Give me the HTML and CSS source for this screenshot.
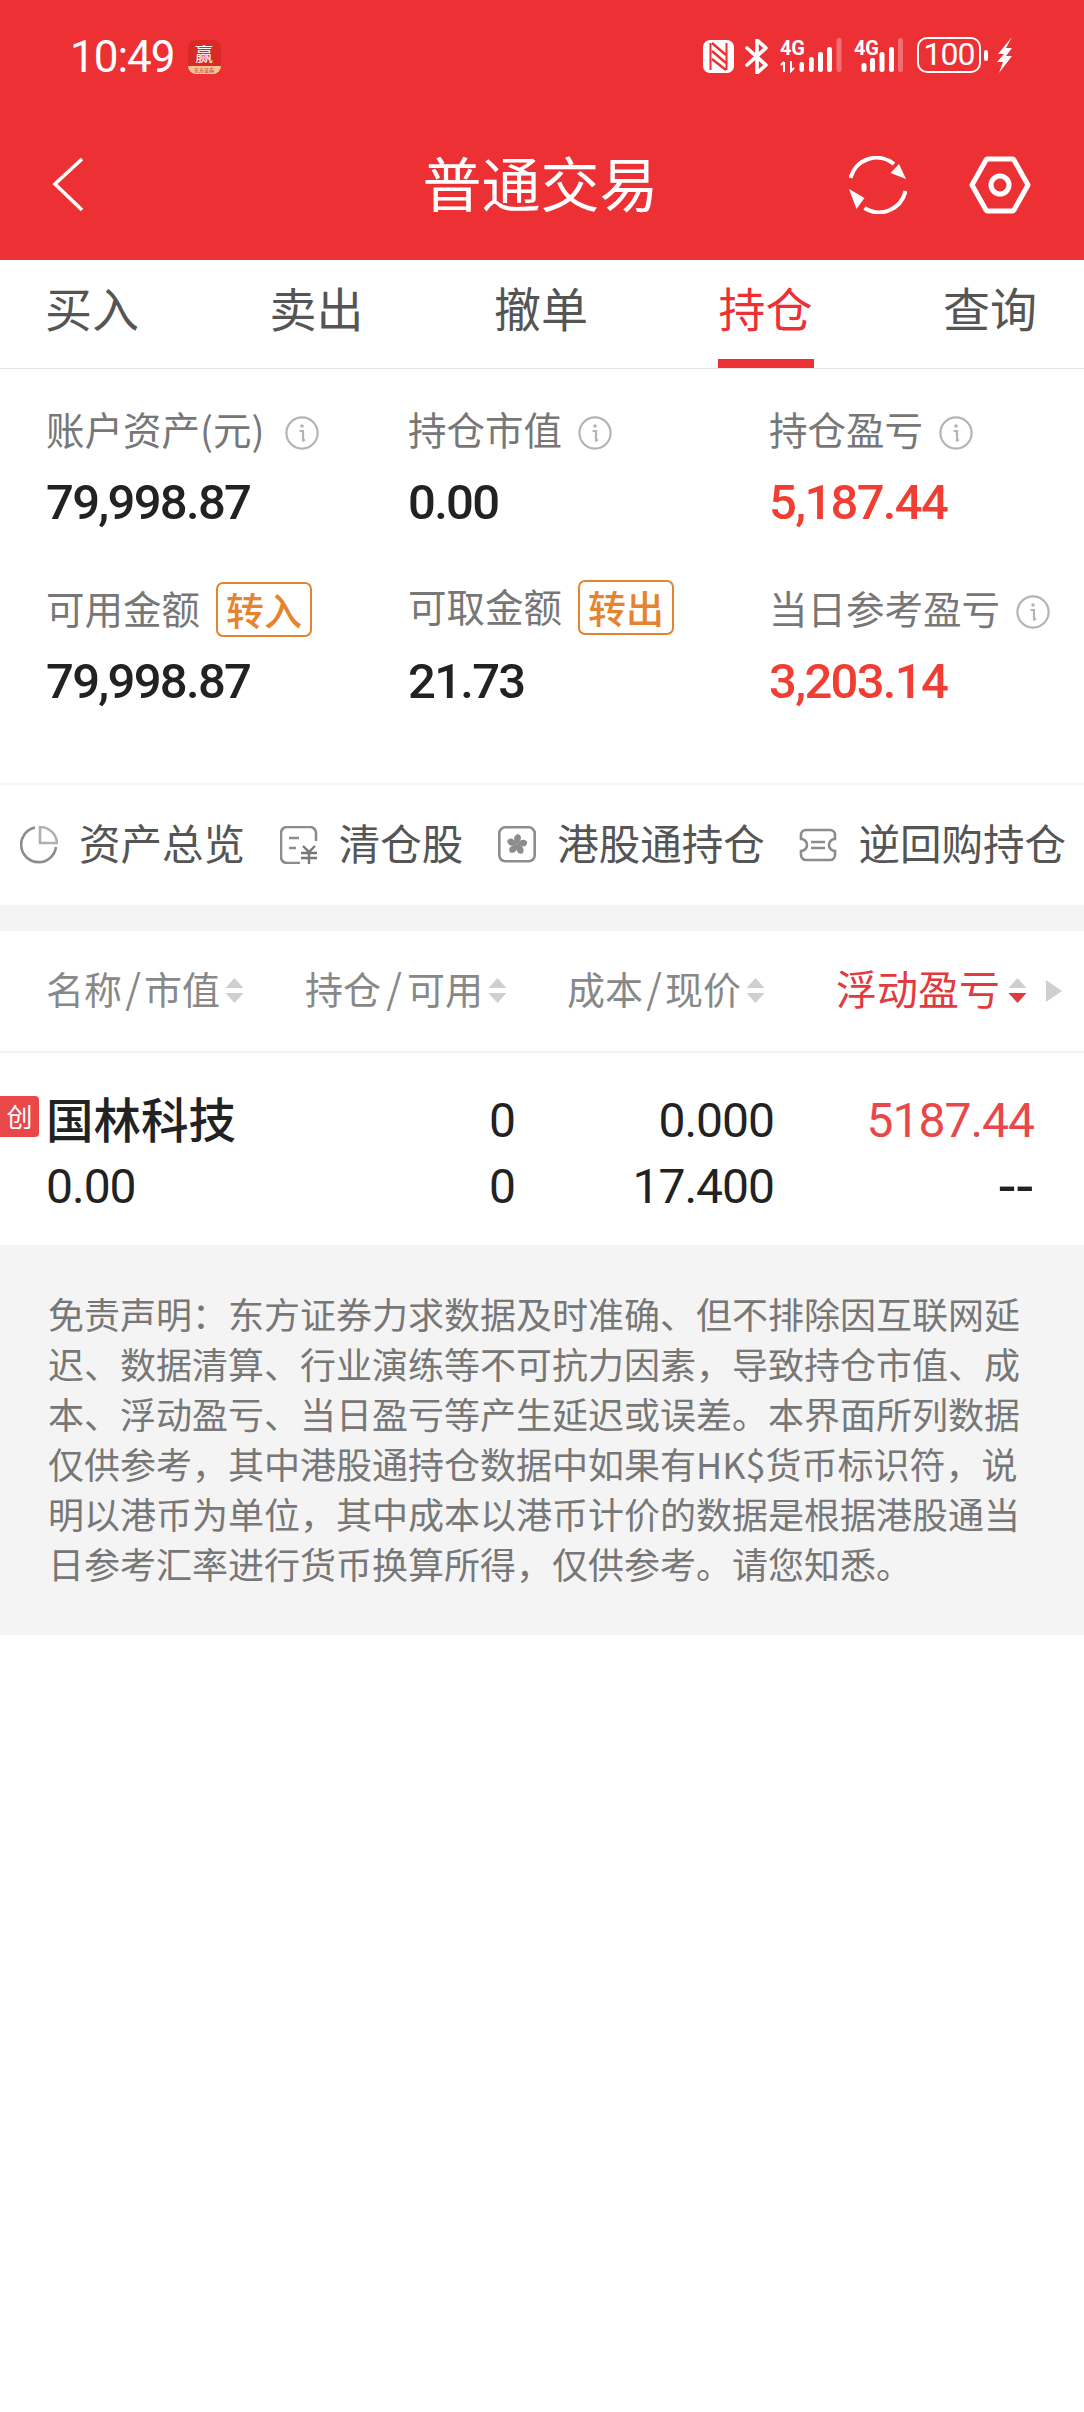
FILE: index.html
```html
<!DOCTYPE html>
<html lang="zh-CN">
<head>
<meta charset="utf-8">
<title>普通交易</title>
<link rel="stylesheet" href="styles.css">
</head>
<body>
<header class="top">
  <div class="status">
    <div class="status-left">
      <span class="clock">10:49</span>
      <span class="appicon"><span class="appicon-char">赢</span><span class="appicon-band">东方证券</span></span>
    </div>
    <div class="status-right">
      <svg class="ic-nfc" viewBox="0 0 31 33"><rect width="31" height="33" rx="7" fill="#fff"/><path d="M7.5 3v27M23.5 3v27" stroke="#ec3033" stroke-width="2"/><path d="M9 3l14 12M9 11l14 12M9 19l14 11" stroke="#ec3033" stroke-width="2.4" fill="none"/></svg>
      <svg class="ic-bt" viewBox="0 0 23 35"><path d="M2 9l19 17-9 8V1l9 8L2 26" fill="none" stroke="#fff" stroke-width="3.6" stroke-linejoin="round" stroke-linecap="round"/></svg>
      <svg class="ic-sig1" viewBox="0 0 62 36"><text x="0" y="18" class="sig-text">4G</text><path d="M4 35V25M1 28l3-3M11 24v10l3-3" fill="none" stroke="#fff" stroke-width="2"/><rect x="19.500" y="25" width="4.500" height="10" rx="2.200" fill="#fff"/><rect x="29" y="20" width="4.800" height="15" rx="2.200" fill="#fff"/><rect x="38" y="15" width="5" height="20" rx="2.200" fill="#fff"/><rect x="47" y="10" width="5" height="25" rx="2.200" fill="#fff"/><rect x="56.500" y="1" width="5" height="34" rx="2.200" fill="#fff" opacity=".3"/></svg>
      <svg class="ic-sig2" viewBox="0 0 50 36"><text x="0" y="18" class="sig-text">4G</text><rect x="7.500" y="26" width="5" height="9" rx="2.200" fill="#fff"/><rect x="16" y="21" width="5" height="14" rx="2.200" fill="#fff"/><rect x="25.500" y="15" width="5" height="20" rx="2.200" fill="#fff"/><rect x="35" y="10" width="5" height="25" rx="2.200" fill="#fff"/><rect x="44" y="1" width="5" height="34" rx="2.200" fill="#fff" opacity=".3"/></svg>
      <div class="battery"><span class="bat-body">100</span><span class="bat-nub"></span></div>
      <svg class="ic-bolt" viewBox="0 0 15 36"><path d="M15 0L1 17h6L0 25h6L2 36 15 19H9l6-8H9z" fill="#fff"/></svg>
    </div>
  </div>
  <nav class="nav">
    <svg class="ic-back" viewBox="0 0 36 60"><path d="M32 4L5 29l27 26" fill="none" stroke="#fff" stroke-width="3.600"/></svg>
    <h1 class="title">普通交易</h1>
    <div class="nav-actions">
      <svg class="ic-refresh" viewBox="0 0 58 58"><path d="M1.500 22A27 27 0 0 1 45 8" fill="none" stroke="#fff" stroke-width="4"/><path d="M41.500 17L57 23 50 8z" fill="#fff"/><path d="M56.500 35A27 27 0 0 1 15.500 52" fill="none" stroke="#fff" stroke-width="4"/><path d="M15.500 42L0 33 7.500 53z" fill="#fff"/></svg>
      <svg class="ic-hex" viewBox="0 0 62 60"><path d="M3 30L17 5a2 2 0 0 1 2-1H43a2 2 0 0 1 2 1L59 30 45 55a2 2 0 0 1-2 1H19a2 2 0 0 1-2-1z" fill="none" stroke="#fff" stroke-width="5" stroke-linejoin="round"/><circle cx="31" cy="30" r="9" fill="none" stroke="#fff" stroke-width="5"/></svg>
    </div>
  </nav>
</header>

<div class="tabs">
  <span class="tab">买入</span>
  <span class="tab">卖出</span>
  <span class="tab">撤单</span>
  <span class="tab tab-active">持仓</span>
  <span class="tab">查询</span>
</div>

<section class="stats">
  <div class="stat">
    <div class="stat-label">账户资产(元)<svg class="ic-info gap-s" viewBox="0 0 34 34"><use href="#info"/></svg></div>
    <div class="stat-value">79,998.87</div>
  </div>
  <div class="stat">
    <div class="stat-label">持仓市值<svg class="ic-info" viewBox="0 0 34 34"><use href="#info"/></svg></div>
    <div class="stat-value">0.00</div>
  </div>
  <div class="stat">
    <div class="stat-label">持仓盈亏<svg class="ic-info" viewBox="0 0 34 34"><use href="#info"/></svg></div>
    <div class="stat-value up">5,187.44</div>
  </div>
  <div class="stat">
    <div class="stat-label">可用金额<span class="btn">转入</span></div>
    <div class="stat-value">79,998.87</div>
  </div>
  <div class="stat">
    <div class="stat-label raised">可取金额<span class="btn">转出</span></div>
    <div class="stat-value">21.73</div>
  </div>
  <div class="stat">
    <div class="stat-label">当日参考盈亏<svg class="ic-info" viewBox="0 0 34 34"><use href="#info"/></svg></div>
    <div class="stat-value up">3,203.14</div>
  </div>
</section>

<div class="shortcuts">
  <div class="shortcut">
    <svg class="ic-short" viewBox="0 0 38 38"><path d="M15 1.500A17.500 17.500 0 1 0 36 21" fill="none" stroke="#8c8c8c" stroke-width="2.600"/><path d="M20 1v16h17A17 17 0 0 0 20 1z" fill="none" stroke="#b0b0b0" stroke-width="2.600"/></svg>
    <span class="sc-text">资产总览</span>
  </div>
  <div class="shortcut">
    <svg class="ic-short" viewBox="0 0 38 38"><path d="M36 15V7a6 6 0 0 0-6-6H7a6 6 0 0 0-6 6v24a6 6 0 0 0 6 6h13" fill="none" stroke="#8c8c8c" stroke-width="2.600"/><path d="M9 12h10M9 22h7" stroke="#8c8c8c" stroke-width="2.600"/><path d="M23 20l6 6 6-6M21 27h16M21 32h16M29 26v12" fill="none" stroke="#777" stroke-width="2.400"/></svg>
    <span class="sc-text">清仓股</span>
  </div>
  <div class="shortcut">
    <svg class="ic-short" viewBox="0 0 38 38"><rect x="1.300" y="1.300" width="35.400" height="34" rx="6" fill="none" stroke="#8c8c8c" stroke-width="2.600"/><g fill="#8c8c8c"><path id="petal" d="M19 18.500C15 15 15 10 19.500 8 23 9 24 12 22 14.500 21 16 20 17 19 18.500z"/><use href="#petal" transform="rotate(72 19 18.500)"/><use href="#petal" transform="rotate(144 19 18.500)"/><use href="#petal" transform="rotate(216 19 18.500)"/><use href="#petal" transform="rotate(288 19 18.500)"/></g></svg>
    <span class="sc-text">港股通持仓</span>
  </div>
  <div class="shortcut">
    <svg class="ic-short" viewBox="0 0 38 38"><path d="M7 4H31a5 5 0 0 1 5 5v4a6 6 0 0 0 0 12v4a5 5 0 0 1-5 5H7a5 5 0 0 1-5-5v-4a6 6 0 0 0 0-12V9a5 5 0 0 1 5-5z" fill="none" stroke="#8c8c8c" stroke-width="2.600"/><path d="M12 16h14M12 22h14" stroke="#8c8c8c" stroke-width="2.400"/></svg>
    <span class="sc-text">逆回购持仓</span>
  </div>
</div>

<div class="band"></div>

<div class="thead">
  <div class="th"><span class="th-text">名称<i class="sl">/</i>市值</span><svg class="ic-sort" viewBox="0 0 19 26"><use href="#sort"/></svg></div>
  <div class="th"><span class="th-text">持仓<i class="sl sl-wide">/</i>可用</span><svg class="ic-sort" viewBox="0 0 19 26"><use href="#sort"/></svg></div>
  <div class="th"><span class="th-text">成本<i class="sl">/</i>现价</span><svg class="ic-sort" viewBox="0 0 19 26"><use href="#sort"/></svg></div>
  <div class="th th-active"><span class="th-text">浮动盈亏</span><svg class="ic-sort" viewBox="0 0 19 26"><path d="M9.500 0L18.500 10H.5z" fill="#cfcfcf"/><path d="M9.500 25L18.500 15H.5z" fill="#df3a3d"/></svg><svg class="ic-more" viewBox="0 0 16 22"><path d="M0 0l16 11L0 22z" fill="#cfcfcf"/></svg></div>
</div>

<div class="row">
  <span class="badge">创</span>
  <div class="name">国林科技</div>
  <div class="num">0</div>
  <div class="num">0.000</div>
  <div class="num up-soft">5187.44</div>
  <div class="cap">0.00</div>
  <div class="num">0</div>
  <div class="num">17.400</div>
  <div class="num dashes">--</div>
</div>

<section class="notice">
  免责声明：东方证券力求数据及时准确、但不排除因互联网延<br>
  迟、数据清算、行业演练等不可抗力因素，导致持仓市值、成<br>
  本、浮动盈亏、当日盈亏等产生延迟或误差。本界面所列数据<br>
  仅供参考，其中港股通持仓数据中如果有HK$货币标识符，说<br>
  明以港币为单位，其中成本以港币计价的数据是根据港股通当<br>
  日参考汇率进行货币换算所得，仅供参考。请您知悉。
</section>

<svg class="defs" aria-hidden="true">
  <symbol id="info" viewBox="0 0 34 34"><circle cx="17" cy="17" r="15.600" fill="none" stroke="#b0b5ba" stroke-width="2.200"/><circle cx="17" cy="10" r="1.800" fill="#b0b5ba"/><path d="M14.500 15h3.500v9.500l2-.8" fill="none" stroke="#b0b5ba" stroke-width="2.200"/></symbol>
  <symbol id="sort" viewBox="0 0 19 26"><path d="M9.500 0L18.500 10H.5zM9.500 25L18.500 15H.5z" fill="#cfcfcf"/></symbol>
</svg>
</body>
</html>
```
FILE: styles.css
```css
* { box-sizing: border-box; }
html, body { margin: 0; padding: 0; background: #fff; }
body {
  width: 1084px;
  font-family: "Noto Sans CJK SC", "Noto Sans", sans-serif;
  color: #222;
}
svg { display: block; flex: none; }
.defs { width: 0; height: 0; overflow: hidden; }

/* top */
.top { height: 260px; background: #ec3033; color: #fff; }
.status {
  height: 114px;
  padding: 37px 72px 0 70px;
  display: flex;
  justify-content: space-between;
  align-items: flex-start;
}
.status-left { display: flex; align-items: center; gap: 13px; height: 40px; }
.clock {
  font-family: Roboto, sans-serif;
  font-size: 44px;
  line-height: 52px;
  letter-spacing: -1px;
}
.appicon {
  width: 33px;
  height: 34px;
  border-radius: 8px;
  background: #d92a28;
  display: flex;
  flex-direction: column;
  align-items: center;
}
.appicon-char { font-size: 18px; line-height: 26px; height: 26px; color: #fff; }
.appicon-band {
  align-self: stretch;
  height: 8px;
  border-radius: 0 0 8px 8px;
  background: #f6c38f;
  color: #a33;
  font-size: 5px;
  line-height: 8px;
  text-align: center;
  white-space: nowrap;
}
.status-right { display: flex; align-items: flex-start; }
.ic-nfc { width: 31px; height: 33px; margin-top: 3px; }
.ic-bt { width: 23px; height: 35px; margin: 2px 0 0 11px; }
.ic-sig1 { width: 62px; height: 36px; margin-left: 12px; }
.ic-sig2 { width: 50px; height: 36px; margin-left: 12px; }
.battery { display: flex; align-items: center; gap: 3px; margin-left: 13px; height: 36px; }
.bat-body {
  width: 64px;
  height: 36px;
  border: 2.4px solid #fff;
  border-radius: 10px;
  font-family: Roboto, sans-serif;
  font-size: 32px;
  line-height: 31px;
  letter-spacing: -1px;
  text-align: center;
}
.bat-nub { width: 4px; height: 11px; border-radius: 2px; background: #fff; }
.ic-bolt { width: 15px; height: 36px; margin-left: 9px; }
.sig-text { font-family: Roboto, sans-serif; font-weight: 700; font-size: 20px; fill: #fff; letter-spacing: -.3px; }

.nav {
  height: 146px;
  padding: 0 53px 4px 50px;
  display: grid;
  grid-template-columns: 1fr auto 1fr;
  align-items: center;
}
.title {
  margin: 0;
  padding-bottom: 6px;
  font-size: 59px;
  font-weight: 400;
  line-height: 80px;
  white-space: nowrap;
}
.ic-back { width: 36px; height: 60px; }
.nav-actions { display: flex; gap: 62px; justify-content: flex-end; align-items: center; }
.ic-refresh { width: 58px; height: 58px; }
.ic-hex { width: 62px; height: 60px; }

/* tabs */
.tabs {
  height: 109px;
  padding: 0 46px 0 44px;
  display: flex;
  justify-content: space-between;
  border-bottom: 1px solid #e4e4e4;
}
.tab {
  width: 96px;
  height: 108px;
  font-size: 47px;
  line-height: 94px;
  text-align: center;
  color: #555;
}
.tab-active { color: #ec3033; border-bottom: 9px solid #ec3033; }

/* stats */
.stats {
  height: 414px;
  padding: 36px 0 0 46px;
  display: grid;
  grid-template-columns: 362px 361px 315px;
  grid-auto-rows: 129px;
  row-gap: 50px;
  align-content: start;
}
.stat-label {
  height: 50px;
  padding-bottom: 5px;
  display: flex;
  align-items: center;
  font-size: 38.5px;
  color: #777;
  white-space: nowrap;
}
.raised { padding-bottom: 9px; }
.stat-value {
  margin-top: 18px;
  height: 60px;
  font-family: Roboto, sans-serif;
  font-weight: 500;
  font-size: 49px;
  line-height: 60px;
  letter-spacing: -1.7px;
  color: #222;
}
.up { color: #f03e33; }
.ic-info { width: 34px; height: 34px; margin: 11px 0 0 16px; }
.gap-s { margin-left: 20px; }
.btn {
  width: 96px;
  height: 55px;
  margin: 5px 0 0 16px;
  border: 2px solid #e5832f;
  border-radius: 7px;
  color: #e5832f;
  font-size: 38px;
  font-weight: 500;
  line-height: 50px;
  text-align: center;
}

/* shortcuts */
.shortcuts {
  height: 122px;
  padding: 0 18px 0 20px;
  border-top: 2px solid #f4f4f4;
  display: flex;
  justify-content: space-between;
  align-items: center;
}
.shortcut {
  display: flex;
  align-items: center;
  gap: 21px;
  font-size: 41.5px;
  color: #555;
  white-space: nowrap;
}
.sc-text { padding-bottom: 6px; }
.ic-short { width: 38px; height: 38px; }
.band { height: 26px; background: #f4f4f4; }

/* table */
.thead {
  height: 122px;
  padding-left: 46px;
  display: grid;
  grid-template-columns: 259px 262px 269px 1fr;
  align-items: center;
  border-bottom: 2px solid #f2f2f2;
}
.th {
  display: flex;
  align-items: center;
  gap: 5px;
  font-size: 38px;
  color: #888;
  white-space: nowrap;
}
.th-text { padding-bottom: 8px; }
.sl {
  font-style: normal;
  display: inline-block;
  width: 22px;
  font-size: 40px;
  text-align: center;
}
.sl-wide { width: 26px; }
.th-active { color: #e03b3e; font-size: 41px; gap: 8px; }
.ic-sort { width: 19px; height: 26px; }
.ic-more { width: 16px; height: 22px; margin-left: 11px; }
.row {
  position: relative;
  height: 192px;
  padding: 35px 50px 0 46px;
  display: grid;
  grid-template-columns: 301px 168px 259px 260px;
  grid-auto-rows: 66px;
  align-items: center;
}
.badge {
  position: absolute;
  left: 0;
  top: 43px;
  width: 39px;
  height: 41px;
  background: #e8484a;
  border-radius: 0 4px 4px 0;
  color: #fff;
  font-size: 26px;
  line-height: 40px;
  text-align: center;
}
.name { font-size: 47.5px; font-weight: 500; line-height: 60px; height: 60px; padding-bottom: 2px; align-self: start; color: #222; white-space: nowrap; }
.num, .cap {
  font-family: Roboto, sans-serif;
  font-size: 48px;
  line-height: 66px;
  letter-spacing: -1px;
  color: #222;
}
.num { text-align: right; }
.dashes { font-size: 60px; letter-spacing: 1px; }
.up-soft { color: #e8484a; }

/* notice */
.notice {
  height: 390px;
  padding: 43px 0 0 48px;
  background: #f4f4f4;
  font-size: 36px;
  line-height: 50px;
  color: #777;
  white-space: nowrap;
}
```
